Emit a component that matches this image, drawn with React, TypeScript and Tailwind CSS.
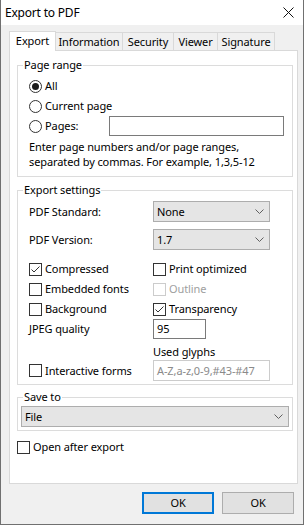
import * as React from "react";
import clsx from "clsx";

function Chevron() {
  return (
    <svg width="9" height="5" viewBox="0 0 9 5" className="text-[#606060]">
      <path d="M0.5 0.5 L4.5 4.5 L8.5 0.5" fill="none" stroke="currentColor" strokeWidth="1" />
    </svg>
  );
}

function Radio({ checked }: { checked?: boolean }) {
  return (
    <span className="w-[13px] h-[13px] rounded-full border border-[#333333] bg-white flex items-center justify-center shrink-0">
      {checked && <span className="w-[7px] h-[7px] rounded-full bg-[#1a1a1a]" />}
    </span>
  );
}

function CheckBox({ checked, disabled }: { checked?: boolean; disabled?: boolean }) {
  return (
    <span
      className={clsx(
        "w-[13px] h-[13px] border bg-white shrink-0 flex items-center justify-center",
        disabled ? "border-[#cccccc]" : "border-[#333333]"
      )}
    >
      {checked && (
        <svg width="11" height="11" viewBox="0 0 11 11">
          <path d="M1.5 5.5 L4 8 L9.5 2.5" fill="none" stroke="#333333" strokeWidth="1" />
        </svg>
      )}
    </span>
  );
}

function Option({ label, checked, disabled }: { label: string; checked?: boolean; disabled?: boolean }) {
  return (
    <div className="flex items-center gap-[3px] h-[20px]">
      <CheckBox checked={checked} disabled={disabled} />
      <span className={disabled ? "text-[#a0a0a0]" : ""}>{label}</span>
    </div>
  );
}

function Select({ value, className }: { value: string; className?: string }) {
  return (
    <div
      className={clsx(
        "h-[21px] flex items-center justify-between bg-[#e5e5e5] border border-[#adadad] pl-[3px] pr-[5px]",
        className
      )}
    >
      <span>{value}</span>
      <Chevron />
    </div>
  );
}

function Group({ title, className, children }: { title: string; className?: string; children: React.ReactNode }) {
  return (
    <div className={clsx("relative border border-[#dcdcdc]", className)}>
      <span className="absolute -top-[9px] left-[5px] bg-white px-[1px] leading-[16px]">{title}</span>
      {children}
    </div>
  );
}

const tabs = [
  { name: "Information", w: "w-[67px]" },
  { name: "Security", w: "w-[51px]" },
  { name: "Viewer", w: "w-[44px]" },
  { name: "Signature", w: "w-[57px]" },
];

export default function App() {
  return (
    <div className="w-[304px] h-[525px] flex flex-col bg-[#f0f0f0] border-x border-b border-[#707070] font-['Noto_Sans',sans-serif] text-[11px] tracking-[-0.1px] text-black leading-[16px]">
      {/* title bar */}
      <div className="h-[25px] bg-white flex items-center justify-between pl-[4px] pr-[9px] shrink-0">
        <span className="text-[12px] tracking-[-0.2px]">Export to PDF</span>
        <svg width="11" height="11" viewBox="0 0 11 11">
          <path d="M0.5 0.5 L10.5 10.5 M10.5 0.5 L0.5 10.5" stroke="#111111" strokeWidth="1" />
        </svg>
      </div>

      <div className="flex flex-col pl-[8px] pr-[5px] pt-[6px]">
        {/* tabs */}
        <div className="flex items-end h-[19px]">
          <div className="relative z-10 -mb-px h-[20px] w-[47px] bg-white border-x border-t border-[#d9d9d9] flex items-start justify-center pt-[1px]">
            Export
          </div>
          {tabs.map((t) => (
            <div
              key={t.name}
              className={clsx(
                "h-[18px] border-t border-r border-[#d9d9d9] bg-[#f0f0f0] flex items-center justify-center",
                t.w
              )}
            >
              {t.name}
            </div>
          ))}
        </div>

        {/* panel */}
        <div className="h-[434px] bg-white border border-[#d9d9d9] flex flex-col pl-[7px] pr-[4px]">
          <Group title="Page range" className="mt-[14px] pl-[11px] pt-[10px] pb-[7px]">
            <div className="flex items-center gap-[3px] h-[20px]">
              <Radio checked />
              <span>All</span>
            </div>
            <div className="flex items-center gap-[3px] h-[20px]">
              <Radio />
              <span>Current page</span>
            </div>
            <div className="flex items-center h-[20px]">
              <div className="flex items-center gap-[3px] w-[80px]">
                <Radio />
                <span>Pages:</span>
              </div>
              <div className="h-[20px] w-[175px] border border-[#7a7a7a] bg-white" />
            </div>
            <p className="mt-[3px] leading-[15px]">
              Enter page numbers and/or page ranges,
              <br />
              separated by commas. For example, 1,3,5-12
            </p>
          </Group>

          <Group title="Export settings" className="mt-[13px] pl-[11px] pt-[10px] pb-[3px]">
            <div className="flex items-center">
              <span className="w-[124px]">PDF Standard:</span>
              <Select value="None" className="w-[117px]" />
            </div>
            <div className="flex items-center mt-[7px]">
              <span className="w-[124px]">PDF Version:</span>
              <Select value="1.7" className="w-[117px]" />
            </div>
            <div className="grid grid-cols-[124px_1fr] mt-[9px]">
              <Option label="Compressed" checked />
              <Option label="Print optimized" />
              <Option label="Embedded fonts" />
              <Option label="Outline" disabled />
              <Option label="Background" />
              <Option label="Transparency" checked />
              <div className="h-[20px] flex items-center">JPEG quality</div>
              <div className="h-[20px] w-[53px] border border-[#7a7a7a] bg-white flex items-center pl-[3px]">95</div>
              <div />
              <div className="mt-[5px] h-[15px] leading-[15px]">Used glyphs</div>
              <div className="mt-[1px] flex items-center">
                <Option label="Interactive forms" />
              </div>
              <div className="mt-[1px] h-[21px] w-[117px] border border-[#cccccc] bg-white flex items-center pl-[3px] text-[#8a8a8a]">
                A-Z,a-z,0-9,#43-#47
              </div>
            </div>
          </Group>

          <Group title="Save to" className="mt-[12px] px-[3px] pt-[8px] pb-[3px]">
            <Select value="File" />
          </Group>

          <div className="mt-[6px]">
            <Option label="Open after export" />
          </div>
        </div>

        {/* buttons */}
        <div className="flex justify-end gap-[8px] mt-[8px] pr-[4px]">
          <button className="w-[72px] h-[22px] bg-[#e1e1e1] border-2 border-[#0078d7] flex items-center justify-center">
            OK
          </button>
          <button className="w-[72px] h-[22px] bg-[#e1e1e1] border border-[#adadad] flex items-center justify-center">
            OK
          </button>
        </div>
      </div>
    </div>
  );
}
